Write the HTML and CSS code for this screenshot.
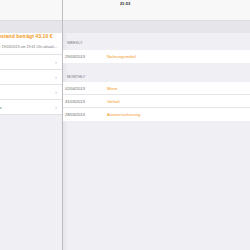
FILE: index.html
```html
<!DOCTYPE html>
<html lang="de">
<head>
  <meta charset="UTF-8">
  <title>Kontostand</title>
  <link rel="stylesheet" href="styles.css">
</head>
<body>

<div class="screen">
  <div class="clock">21:53</div>

  <!-- master panel, half slid out to the left -->
  <div class="sidebar">
    <div class="topbar"></div>
    <div class="band"></div>
    <div class="sidebar-inner">
      <div class="balance">
        <div class="balance-title">Ihr Kontostand beträgt 43.10 €</div>
        <div class="balance-sub">Aktualisiert: 19/03/2013 um 19:41 Uhr aktualisiert</div>
      </div>
      <ul class="menu">
        <li><span>Konten</span><i>›</i></li>
        <li><span>Budget</span><i>›</i></li>
        <li><span>Statistik</span><i>›</i></li>
        <li><span>Einstellungen</span><i>›</i></li>
      </ul>
    </div>
  </div>

  <div class="main">
    <div class="topbar"></div>
    <div class="band"></div>

    <div class="section-title first">WEEKLY</div>
    <ul class="list">
      <li><span class="date">29/03/2013</span><span class="name">Nahrungsmittel</span></li>
    </ul>

    <div class="section-title">MONTHLY</div>
    <ul class="list">
      <li><span class="date">02/04/2013</span><span class="name">Miete</span></li>
      <li><span class="date">31/03/2013</span><span class="name">Gehalt</span></li>
      <li><span class="date">28/03/2013</span><span class="name">Autoversicherung</span></li>
    </ul>
  </div>
</div>

</body>
</html>
```

FILE: styles.css
```css
* { box-sizing: border-box; }
body {
  margin: 0;
  font-family: 'Liberation Sans', Arial, sans-serif;
  background: #efeff4;
  color: #333;
}
ul {
  list-style: none;
  margin: 0;
  padding: 0;
}
.screen {
  position: relative;
  display: flex;
  width: 250px;
  height: 250px;
  overflow: hidden;
}
.clock {
  position: absolute;
  top: 1px;
  left: 0;
  right: 0;
  text-align: center;
  font-size: 4px;
  font-weight: bold;
  color: #222;
}
.topbar {
  height: 21px;
  background: #f8f8f8;
  border-bottom: 1px solid #dcdcdf;
}
.band {
  height: 12px;
  background: #e6e6ea;
}

/* left panel */
.sidebar {
  width: 63px;
  flex: none;
  overflow: hidden;
  background: #efeff4;
  border-right: 1px solid #bcbcc1;
}
.sidebar-inner {
  width: 88px;
  margin-left: -26px;
}
.balance {
  background: #fff;
  padding: 0 0 3px 0;
  border-bottom: 1px solid #e2e2e6;
  height: 22px;
}
.balance-title {
  color: #f39a1e;
  font-size: 5.2px;
  font-weight: bold;
  white-space: nowrap;
  line-height: 6px;
  padding-left: 4px;
}
.balance-sub {
  color: #777;
  font-size: 3.6px;
  line-height: 6px;
  white-space: nowrap;
  overflow: hidden;
  text-overflow: ellipsis;
  width: 84px;
  margin-top: 5px;
  padding-left: 8px;
}
.menu li {
  display: flex;
  justify-content: space-between;
  align-items: center;
  height: 15px;
  background: #fff;
  border-bottom: 1px solid #e2e2e6;
  padding-right: 5px;
  font-size: 4.4px;
  color: #333;
}
.menu li span {
  margin-left: 1px;
}
.menu li i {
  font-style: normal;
  color: #b8b8bc;
  font-size: 6px;
}

/* right panel */
.main {
  flex: 1;
  background: #efeff4;
  box-shadow: inset 7px 0 4px -5px rgba(0,0,0,0.05);
}
.section-title {
  font-size: 3.8px;
  color: #77777c;
  padding: 0 0 2px 4px;
  margin-top: 12px;
  line-height: 5px;
}
.section-title.first {
  margin-top: 8px;
  padding-bottom: 4px;
}
.list li {
  display: flex;
  align-items: center;
  height: 13px;
  background: #fff;
  border-bottom: 1px solid #e6e6ea;
  padding-left: 2px;
  font-size: 4px;
}
.list li:last-child {
  border-bottom: none;
}
.date {
  width: 42px;
  color: #666;
}
.name {
  color: #f39a1e;
  font-size: 4.3px;
}
```
